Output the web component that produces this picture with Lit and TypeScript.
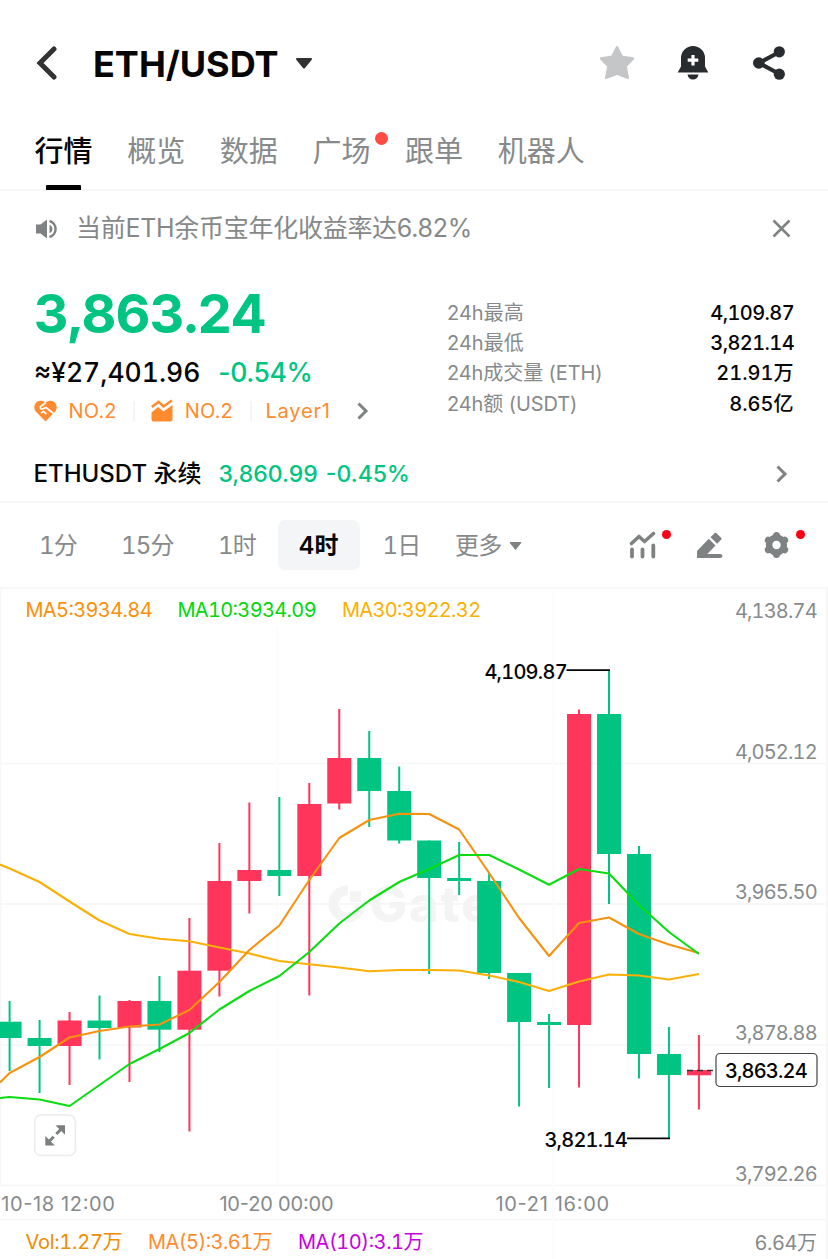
import { LitElement, html, svg, css } from "lit";
import { customElement } from "lit/decorators.js";
import { classMap } from "lit/directives/class-map.js";

const TABS = [
  { label: "行情", active: true },
  { label: "概览" },
  { label: "数据" },
  { label: "广场", dot: true },
  { label: "跟单" },
  { label: "机器人" },
];

const STATS = [
  ["24h最高", "4,109.87"],
  ["24h最低", "3,821.14"],
  ["24h成交量 (ETH)", "21.91万"],
  ["24h额 (USDT)", "8.65亿"],
];

// direction, wick top, wick bottom, body top, body bottom
const CANDLES: [string, number, number, number, number][] = [
  ["g", 1001, 1071, 1021.7, 1038],
  ["g", 1020, 1093, 1038, 1046],
  ["r", 1012, 1085, 1020.5, 1046],
  ["g", 995.5, 1059.5, 1020.5, 1028],
  ["r", 1000, 1082, 1001, 1027.5],
  ["g", 976, 1052, 1001, 1029.7],
  ["r", 918, 1131.5, 970.7, 1029.7],
  ["r", 843, 996.5, 881, 970.7],
  ["r", 802.5, 913.5, 870, 881],
  ["g", 797, 896, 870, 876],
  ["r", 783, 995.5, 804, 876],
  ["r", 709, 809.5, 758, 803.5],
  ["g", 731, 827, 758, 791],
  ["g", 766.5, 843.5, 791, 840.5],
  ["g", 840.5, 974, 840.5, 878],
  ["g", 842, 895, 878, 881],
  ["g", 873, 979, 881, 973],
  ["g", 973, 1106.5, 973, 1022],
  ["g", 1014, 1088, 1022, 1025],
  ["r", 709.5, 1087.5, 714, 1025],
  ["g", 670, 904, 714, 854],
  ["g", 846, 1078.5, 854, 1054],
  ["g", 1027, 1138.5, 1054, 1075],
  ["r", 1035, 1109.5, 1070, 1075.3],
];

const MA5 = [1082.5, 1073, 1057, 1037.5, 1031, 1026.5, 1024.5, 1010, 982, 950, 925.5, 880, 838, 820, 813.7, 814, 829.5, 873, 918, 956, 923, 917.5, 934, 944.5, 953];
const MA10 = [1098, 1097, 1099.5, 1106, 1085, 1064, 1049, 1033, 1009.5, 991, 976, 952, 923.5, 900.5, 882, 869, 855, 855, 869.5, 884.7, 869, 873.5, 905, 932, 954];
const MA30 = [864.5, 868.5, 882, 901.5, 920.5, 934, 938.7, 941.3, 947.5, 953.5, 961, 964.3, 967.5, 971.2, 970, 970, 970.5, 975.5, 982, 991, 981.5, 974.5, 975.5, 979.5, 974];

const CHART_TOP = 587;
const centre = (i: number) => 9.6 + i * 29.97;
const line = (ys: number[]) =>
  ys.map((y, i) => `${i === 0 ? 0 : centre(i - 1)},${y - CHART_TOP}`).join(" ");

const label = (text: string, x: number, mid: number, width: number, cls = "axis") =>
  svg`<text class=${cls} x=${x - 0.6} y=${mid - CHART_TOP + 7.1} textLength=${width + 1.2}>${text}</text>`;

@customElement("price-chart")
class PriceChart extends LitElement {
  static styles = css`
    :host { display: block; height: 672px; }
    svg { display: block; }
    text { font: 400 20px Inter, "Noto Sans CJK SC", sans-serif; font-feature-settings: "tnum"; white-space: pre; }
    .axis, .date { fill: #868a8c; }
    .date { font-feature-settings: normal; }
    .mark { fill: #050505; font-weight: 500; }
    .ma5 { fill: #fb8f0b; }
    .vol { fill: #f08c00; }
    .vma5 { fill: #ff8b2e; }
    .ma10 { fill: #00d70c; }
    .ma30 { fill: #fbb000; }
    .vma10 { fill: #c800e0; }
    .water { font-size: 50px; font-weight: 800; fill: #f4f4f4; letter-spacing: 2px; }
    .ring { fill: none; stroke: #f4f4f4; stroke-width: 10; }
    .chip { fill: #f4f4f4; }
    .grid { stroke: #f7f7f8; stroke-width: 1.8; fill: none; }
    .vgrid { stroke: #fcfcfc; stroke-width: 2; }
    .g { fill: #00c582; }
    .r { fill: #ff355c; }
    .l5, .l10, .l30 { fill: none; stroke-width: 2.1; stroke-linejoin: round; }
    .l5 { stroke: #f59210; }
    .l10 { stroke: #0bdc12; }
    .l30 { stroke: #fab005; }
    .lead { stroke: #050505; stroke-width: 1.8; }
    .dash { stroke: #333; stroke-width: 1.5; stroke-dasharray: 6 4; }
    .box { fill: #fff; stroke: #444; stroke-width: 1.2; }
    .expand { fill: #fff; stroke: #ebeced; stroke-width: 1.5; }
    .arrow { fill: #7c7f80; }
    .shaft { stroke: #7c7f80; stroke-width: 3; }
  `;

  render() {
    return html`
      <svg width="828" height="672" viewBox="0 0 828 672">
        <path class="grid" d="M0 .9H828M0 176.5H828M0 317H828M0 458H828M0 598.3H828M0 632.5H828M.5 0V598M827 0V672" />
        <path class="vgrid" d="M277 40V598M553 5V672" />
        <path class="ring" d="M348 303.5A13.500 13.500 0 1 0 360.500 318" />
        <rect class="chip" x="350" y="304" width="11" height="11" />
        <text class="water" x="369.500" y="334.500">Gate</text>
        ${CANDLES.map(
          ([d, wt, wb, bt, bb], i) => svg`
            <rect class=${d} x=${centre(i) - 1} y=${wt - CHART_TOP} width="2" height=${wb - wt} />
            <rect class=${d} x=${centre(i) - 12} y=${bt - CHART_TOP} width="24" height=${bb - bt} />`
        )}
        <polyline class="l30" points=${line(MA30)} />
        <polyline class="l5" points=${line(MA5)} />
        <polyline class="l10" points=${line(MA10)} />
        <path class="lead" d="M566.5 83.2H610M627 551.3H670" />
        <path class="dash" d="M687 483.5H716" />
        ${label("MA5:3934.84", 26, 610, 126, "ma5")}
        ${label("MA10:3934.09", 178, 610, 138, "ma10")}
        ${label("MA30:3922.32", 342.5, 610, 138, "ma30")}
        ${label("4,138.74", 735.5, 611, 81.5)}
        ${label("4,052.12", 735.5, 751.5, 81.5)}
        ${label("3,965.50", 735.5, 892, 81.5)}
        ${label("3,878.88", 735.5, 1033, 81.5)}
        ${label("3,792.26", 735.5, 1174, 81.5)}
        ${label("4,109.87", 485, 671.5, 82, "mark")}
        ${label("3,821.14", 545, 1140, 82, "mark")}
        <rect class="box" x="716" y="466.5" width="101" height="33" rx="4" />
        ${label("3,863.24", 725.5, 1071, 81.5, "mark")}
        <rect class="expand" x="34.7" y="528" width="40.5" height="40.5" rx="6" />
        <path class="arrow" d="M55.5 538.3H65V547.8ZM45.3 549V558.500H54.800Z" />
        <path class="shaft" d="M61.500 541.800L56.300 547M48.500 555L53.700 549.800" />
        ${label("10-18 12:00", 1.8, 1204, 112.5, "date")}
        ${label("10-20 00:00", 220, 1204, 113, "date")}
        ${label("10-21 16:00", 496, 1204, 112.5, "date")}
        ${label("Vol:1.27万", 26, 1241.5, 96, "vol")}
        ${label("MA(5):3.61万", 148.5, 1241.5, 123.5, "vma5")}
        ${label("MA(10):3.1万", 298.5, 1241.5, 124.500, "vma10")}
        ${label("6.64万", 755, 1242.5, 61.5)}
      </svg>`;
  }
}

@customElement("app-root")
class AppRoot extends LitElement {
  static styles = css`
    :host { display: block; width: 828px; height: 1259px; overflow: hidden; background: #fff; color: #060606;
      font-family: Inter, "Noto Sans CJK SC", sans-serif; }
    * { box-sizing: border-box; }
    svg { display: block; flex: none; }
    span { white-space: nowrap; }
    .header { display: flex; align-items: center; height: 126px; padding: 0 42px 0 35.500px; }
    .title { margin-left: 35.500px; width: 202px; font-size: 36px; font-weight: 700; letter-spacing: 0; line-height: 40px; padding-top: 1px; }
    .actions { display: flex; gap: 43px; margin-left: auto; }
    .star { margin-right: -1px; }
    .tabs { display: flex; gap: 34.600px; height: 65px; padding-left: 34.600px; border-bottom: 2px solid #f8f8f8; }
    .tab { position: relative; height: 64px; font-size: 29px; line-height: 52px; color: #878a8b; }
    .tab.active { color: #060606; font-weight: 500; }
    .tab.active::after { content: ""; position: absolute; left: 11.400px; bottom: 0; width: 35px; height: 5px; background: #000; border-radius: 1px 1px 0 0; }
    .tab.dot::before { content: ""; position: absolute; right: -18px; top: 6px; width: 13px; height: 13px; border-radius: 50%; background: #ff4b42; }
    .notice { display: flex; align-items: center; height: 75px; padding: 0 37px 0 35px; color: #858889; font-size: 25px; line-height: 30px; }
    .notice span { margin-left: 18px; margin-top: -1px; letter-spacing: -0.280px; }
    .notice .close { margin-left: auto; }
    .summary { display: flex; justify-content: space-between; height: 176px; padding: 0 34px 0 34px; }
    .price { margin-top: 21px; font-size: 54px; line-height: 54px; font-weight: 750; color: #00c582; font-feature-settings: "tnum"; letter-spacing: -0.900px; }
    .fiat { display: flex; gap: 18px; margin-top: 15px; font-size: 26.500px; font-weight: 500; line-height: 32px; }
    .fiat .cny { font-feature-settings: "tnum"; }
    .fiat .green { letter-spacing: -0.400px; }
    .green { color: #00c582; }
    .tags { display: flex; align-items: center; height: 28px; margin-top: 9px; color: #ff8b2e; font-size: 20px; }
    .tags span { margin-left: 11.500px; letter-spacing: .2px; }
    .tags i { width: 2px; height: 20px; margin: 0 16px 0 16.500px; background: #f5f5f6; }
    .tags .layer { margin: 0 25px 0 -2px; letter-spacing: .8px; }
    .stats { width: 347px; padding-top: 32px; font-size: 20px; line-height: 30.200px; }
    .stat { display: flex; justify-content: space-between; color: #878a8b; }
    .stat b { font-size: 20px; font-weight: 500; color: #060606; font-feature-settings: "tnum"; letter-spacing: -0.600px; }
    .stat:nth-child(n+3) b { letter-spacing: 0; margin-right: .5px; }
    .stat:nth-child(n+3) span { letter-spacing: -0.100px; }
    .perp { display: flex; align-items: center; height: 61px; padding: 5px 40px 0 33.500px; border-bottom: 2px solid #f8f8f8; font-size: 24px; font-weight: 500; line-height: 30px; }
    .perp .quote { margin-left: 17px; font-size: 23px; word-spacing: 2px; }
    .perp svg { margin-left: auto; }
    .bar { display: grid; grid-template-columns: 82px 97px 59.500px 105px 72.500px 90px auto; align-items: center; height: 84px; padding-left: 39px; padding-right: 38px; color: #878a8b; font-size: 24px; line-height: 30px; }
    .bar > span:not(.pill) { padding-top: 2px; font-feature-settings: "tnum"; letter-spacing: -0.800px; }
    .bar .pill { width: 82px; height: 50px; border-radius: 7px; background: #f3f5f6; color: #060606; text-align: center; line-height: 52px; font-weight: 600; }
    .bar > .more { display: flex; align-items: center; gap: 8px; letter-spacing: .3px; }
    .tools { display: flex; justify-content: flex-end; gap: 40px; }
    .tool { position: relative; }
    .tool.dot::after { content: ""; position: absolute; left: 32.500px; top: -1px; width: 9px; height: 9px; border-radius: 50%; background: #fa0012; }
  `;

  private chevron(color: string) {
    return html`<svg width="13" height="20" viewBox="0 0 13 20"><path d="M2.500 2.500L10 10L2.500 17.500" fill="none" stroke=${color} stroke-width="3" /></svg>`;
  }

  render() {
    return html`
      <div class="header">
        <svg width="22" height="34" viewBox="0 0 22 34"><path d="M18 3L4 17L18 31" fill="none" stroke="#303234" stroke-width="5" stroke-linecap="round" /></svg>
        <span class="title">ETH/USDT</span>
        <svg width="18" height="13" viewBox="0 0 18 13"><path d="M2 2H16L9 10.500Z" fill="#303234" stroke="#303234" stroke-width="2" stroke-linejoin="round" /></svg>
        <div class="actions">
          <svg class="star" width="36" height="36" viewBox="0 0 36 36"><path d="M18 2.200L22.800 11.800L34 13.400L26.600 21.200L28.800 32.800L18 28.600L7.200 32.800L9.400 21.200L2 13.400L13.200 11.800Z" fill="#c4c6c7" stroke="#c4c6c7" stroke-width="2.500" stroke-linejoin="round" /></svg>
          <svg width="32" height="36" viewBox="0 0 32 36"><path d="M4 21.500V13A12 12 0 0 1 28 13V21.500L31.300 27.500H.700ZM10.500 29.500H21.500Q20.500 34.500 16 34.500T10.500 29.500Z" fill="#292c2e" /><path d="M16 10V20.500M10.700 15.200H21.300" stroke="#fff" stroke-width="3.200" /></svg>
          <svg width="34" height="36" viewBox="0 0 34 36"><path d="M27.500 7L7 18L27.500 29" fill="none" stroke="#292c2e" stroke-width="4" /><circle cx="6.800" cy="18" r="5.800" fill="#292c2e" /><circle cx="27.300" cy="6.800" r="5.600" fill="#292c2e" /><circle cx="27.300" cy="29.200" r="5.600" fill="#292c2e" /></svg>
        </div>
      </div>

      <div class="tabs">
        ${TABS.map((t) => html`<span class=${classMap({ tab: true, active: !!t.active, dot: !!t.dot })}>${t.label}</span>`)}
      </div>

      <div class="notice">
        <svg width="23" height="22" viewBox="0 0 23 22"><path d="M1 6.500H5.500L12 1.500V20.500L5.500 15.500H1Z" fill="#7f8283" /><path d="M14.500 7A4.200 4.200 0 0 1 14.500 15Z" fill="#7f8283" /><path d="M14.500 3A8.300 8.300 0 0 1 14.500 19" fill="none" stroke="#7f8283" stroke-width="2.500" /></svg>
        <span>当前ETH余币宝年化收益率达6.82%</span>
        <svg class="close" width="19" height="19" viewBox="0 0 19 19"><path d="M1.500 1.500L17.500 17.500M17.500 1.500L1.500 17.500" stroke="#7f8283" stroke-width="2.500" /></svg>
      </div>

      <div class="summary">
        <div>
          <div class="price">3,863.24</div>
          <div class="fiat"><span class="cny">≈¥27,401.96</span><span class="green">-0.54%</span></div>
          <div class="tags">
            <svg width="23" height="22" viewBox="0 0 23 22"><path d="M11.500 2.500C8-.3 4 .2 1.800 3C-.6 6.300.1 10 2.500 12.300L11.500 21.500L20.500 12.300C23 10 23.500 6.200 21.200 3C18.800 .2 15 -.2 11.500 2.500Z" fill="#ff8b2e" /><path d="M12 2.500L6.500 6.500Q6 9.500 8.500 9L12 7.500L19.500 13.500M7 13L9.500 11.500L12.500 14" fill="none" stroke="#fff" stroke-width="1.700" /></svg>
            <span>NO.2</span><i></i>
            <svg width="22" height="24" viewBox="0 0 22 24"><path d="M.500 13.500L7 8L12.500 12.500L21.500 6V20.500Q21.500 22.500 19.500 22.500H2.500Q.500 22.500 .500 20.500Z" fill="#ff8b2e" /><path d="M.800 8L7.500 2.900L12.500 7.500L20.800 1.500" fill="none" stroke="#ff8b2e" stroke-width="2.500" /></svg>
            <span>NO.2</span><i></i>
            <span class="layer">Layer1</span>
            ${this.chevron("#7f8283")}
          </div>
        </div>
        <div class="stats">
          ${STATS.map(([k, v]) => html`<div class="stat"><span>${k}</span><b>${v}</b></div>`)}
        </div>
      </div>

      <div class="perp">
        <span>ETHUSDT 永续</span><span class="quote green">3,860.99 -0.45%</span>
        ${this.chevron("#7f8283")}
      </div>

      <div class="bar">
        <span>1分</span><span>15分</span><span>1时</span><span class="pill">4时</span><span>1日</span>
        <span class="more">更多<svg width="13" height="10" viewBox="0 0 13 10"><path d="M1 1.500H12L6.500 8.500Z" fill="#7f8283" stroke="#7f8283" stroke-linejoin="round" /></svg></span>
        <div class="tools">
          <span class="tool dot"><svg width="27" height="28" viewBox="0 0 27 28"><path d="M2.500 12.500L10 5.500L15.500 10.500L24.500 2.500" fill="none" stroke="#7f8283" stroke-width="3.600" stroke-linecap="round" stroke-linejoin="round" /><path d="M3 18.500V25.500M13.500 18.500V25.500M24.300 14.500V25.500" stroke="#7f8283" stroke-width="3.800" stroke-linecap="round" /></svg></span>
          <span class="tool"><svg width="27" height="28" viewBox="0 0 27 28"><path d="M1 27V20L12.800 7.800L19.500 14.500L11.300 23H24Q26.500 23 26.500 25T24 27ZM14.500 6.200L18.700 2Q19.500 1.300 20.300 2L25.300 7Q26 7.800 25.300 8.500L21.200 12.800Z" fill="#7f8283" /></svg></span>
          <span class="tool dot"><svg width="27" height="28" viewBox="0 0 27 28"><circle cx="13.500" cy="14" r="10.600" fill="#7f8283" /><path d="M13.500 4.500V23.500M5.300 9.250L21.700 18.750M21.700 9.250L5.300 18.750" stroke="#7f8283" stroke-width="7" stroke-linecap="round" /><circle cx="13.500" cy="14" r="4.200" fill="#fff" /></svg></span>
        </div>
      </div>

      <price-chart></price-chart>
    `;
  }
}
